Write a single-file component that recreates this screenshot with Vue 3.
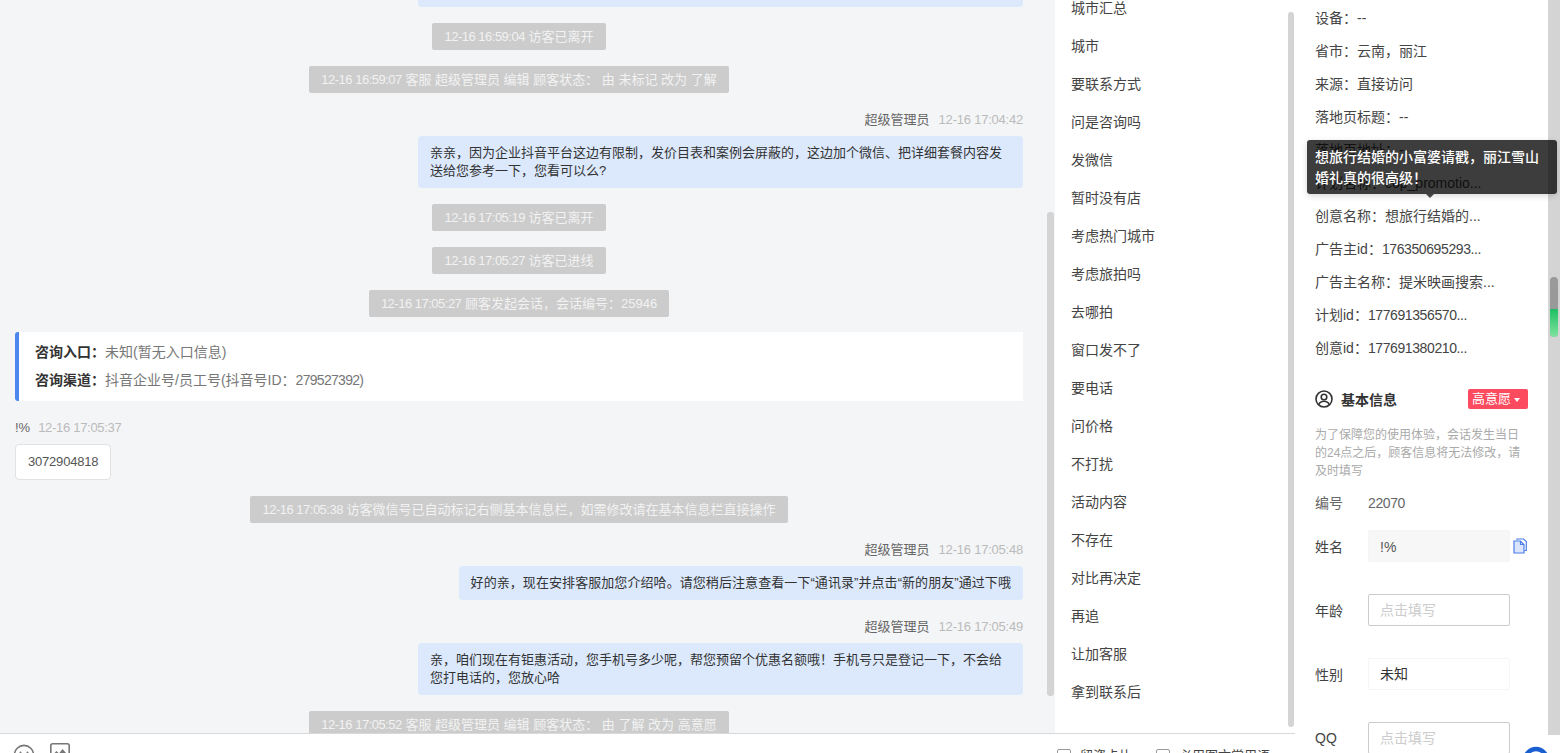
<template>
  <div class="page">
    <div class="main">
      <div class="top">
        <!-- chat -->
        <div class="chat">
          <div class="chat-list">
            <template v-for="(item, i) in messages" :key="i">
              <div v-if="item.type === 'notice'" class="notice">
                <span class="notice-time">{{ item.text.slice(0, 14) }}</span>{{ item.text.slice(14) }}
              </div>
              <div v-else-if="item.type === 'agent'" class="msg msg-right">
                <div class="msg-head">
                  <span class="msg-name">超级管理员</span>
                  <span class="msg-time">{{ item.time }}</span>
                </div>
                <div class="bubble" :class="{ 'bubble-wide': item.wide }">{{ item.text }}</div>
              </div>
              <div v-else-if="item.type === 'visitor'" class="msg msg-left">
                <div class="msg-head">
                  <span class="msg-name">!%</span>
                  <span class="msg-time">{{ item.time }}</span>
                </div>
                <div class="bubble-white">{{ item.text }}</div>
              </div>
              <div v-else class="entry-card">
                <div><b>咨询入口：</b>未知(暂无入口信息)</div>
                <div><b>咨询渠道：</b>抖音企业号/员工号(抖音号ID：<span class="num">279527392</span>)</div>
              </div>
            </template>
          </div>
          <div class="chat-thumb"></div>
        </div>

        <!-- quick tags -->
        <div class="tags">
          <div class="tag-list">
            <div v-for="tag in tags" :key="tag" class="tag">{{ tag }}</div>
          </div>
          <div class="tags-thumb"></div>
        </div>
      </div>

      <div class="toolbar">
        <div class="tools">
          <svg class="tool-smile" width="22" height="22" viewBox="0 0 22 22" fill="none" stroke="#777" stroke-width="1.6">
            <circle cx="11" cy="11" r="9.6" />
            <circle cx="7.5" cy="8.5" r="1" fill="#777" stroke="none" />
            <circle cx="14.5" cy="8.5" r="1" fill="#777" stroke="none" />
            <path d="M6.5 13.5c2.4 2.6 6.6 2.6 9 0" />
          </svg>
          <svg width="20" height="20" viewBox="0 0 20 20" fill="none" stroke="#777" stroke-width="1.6">
            <rect x="0.8" y="0.8" width="18.4" height="18.4" rx="2" />
            <path d="M3.5 11l3-3 2.5 2.5L12.5 6l4 4.5V13h-13z" fill="#777" stroke="none" />
          </svg>
        </div>
        <div class="checks">
          <label class="check"><i></i>留资卡片</label>
          <label class="check"><i></i>必用图文常用语</label>
        </div>
      </div>
    </div>

    <!-- visitor info -->
    <div class="side">
      <div class="side-body">
        <div class="info-rows">
          <div v-for="row in infoRows" :key="row.label" class="info-row">
            {{ row.label }}<span :class="{ num: row.num }">{{ row.value }}</span>
          </div>
        </div>

        <div class="base-head">
          <svg width="18" height="18" viewBox="0 0 18 18" fill="none" stroke="#333" stroke-width="1.6">
            <circle cx="9" cy="9" r="8" />
            <circle cx="9" cy="7" r="2.8" />
            <path d="M3.8 14.6c1-2.3 3-3.3 5.2-3.3s4.2 1 5.2 3.3" />
          </svg>
          <span class="base-title">基本信息</span>
          <span class="level">高意愿<i></i></span>
        </div>
        <p class="base-note">为了保障您的使用体验，会话发生当日的24点之后，顾客信息将无法修改，请及时填写</p>
        <div class="code-row"><span>编号</span><span class="num">22070</span></div>

        <div class="form">
          <div class="form-row">
            <span class="form-label">姓名</span>
            <div class="field field-off">!%</div>
            <svg class="copy" width="14" height="16" viewBox="0 0 14 16" fill="none" stroke="#4d7fe8" stroke-width="1.2">
              <path d="M4 2V1h6.5L13.3 3.5V12.5H11.5" />
              <path d="M1 3h6.5l3.5 3.5V15H1z" fill="#dbe6fb" />
              <path d="M7.5 3v3.5H11" />
            </svg>
          </div>
          <div class="form-row">
            <span class="form-label">年龄</span>
            <div class="field field-empty">点击填写</div>
          </div>
          <div class="form-row">
            <span class="form-label">性别</span>
            <div class="field field-select">未知</div>
          </div>
          <div class="form-row">
            <span class="form-label">QQ</span>
            <div class="field field-empty">点击填写</div>
          </div>
        </div>
      </div>

      <div class="side-thumb"><div class="side-thumb-green"></div></div>

      <div class="tooltip">想旅行结婚的小富婆请戳，丽江雪山婚礼真的很高级！</div>

      <div class="float-btn">
        <svg width="48" height="18" viewBox="0 0 48 18" fill="none">
          <circle cx="24" cy="25" r="11" stroke="#1a5fd0" stroke-width="4.5" />
        </svg>
      </div>
    </div>
  </div>
</template>

<script setup>
const messages = [
  { type: 'notice', text: '12-16 16:59:04 访客已离开' },
  { type: 'notice', text: '12-16 16:59:07 客服 超级管理员 编辑 顾客状态： 由 未标记 改为 了解' },
  {
    type: 'agent',
    time: '12-16 17:04:42',
    text: '亲亲，因为企业抖音平台这边有限制，发价目表和案例会屏蔽的，这边加个微信、把详细套餐内容发送给您参考一下，您看可以么?',
  },
  { type: 'notice', text: '12-16 17:05:19 访客已离开' },
  { type: 'notice', text: '12-16 17:05:27 访客已进线' },
  { type: 'notice', text: '12-16 17:05:27 顾客发起会话，会话编号：25946' },
  { type: 'entry' },
  { type: 'visitor', time: '12-16 17:05:37', text: '3072904818' },
  { type: 'notice', text: '12-16 17:05:38 访客微信号已自动标记右侧基本信息栏，如需修改请在基本信息栏直接操作' },
  {
    type: 'agent',
    time: '12-16 17:05:48',
    wide: true,
    text: '好的亲，现在安排客服加您介绍哈。请您稍后注意查看一下“通讯录”并点击“新的朋友”通过下哦',
  },
  {
    type: 'agent',
    time: '12-16 17:05:49',
    text: '亲，咱们现在有钜惠活动，您手机号多少呢，帮您预留个优惠名额哦！手机号只是登记一下，不会给您打电话的，您放心哈',
  },
  { type: 'notice', text: '12-16 17:05:52 客服 超级管理员 编辑 顾客状态： 由 了解 改为 高意愿' },
]

const tags = [
  '城市汇总', '城市', '要联系方式', '问是咨询吗', '发微信', '暂时没有店', '考虑热门城市', '考虑旅拍吗',
  '去哪拍', '窗口发不了', '要电话', '问价格', '不打扰', '活动内容', '不存在', '对比再决定', '再追', '让加客服', '拿到联系后',
]

const infoRows = [
  { label: '设备：', value: '--' },
  { label: '省市：', value: '云南，丽江' },
  { label: '来源：', value: '直接访问' },
  { label: '落地页标题：', value: '--' },
  { label: '落地页地址：', value: '--' },
  { label: '计划名称：', value: 'cop_promotio...' },
  { label: '创意名称：', value: '想旅行结婚的...' },
  { label: '广告主id：', value: '176350695293...', num: true },
  { label: '广告主名称：', value: '提米映画搜索...' },
  { label: '计划id：', value: '177691356570...', num: true },
  { label: '创意id：', value: '177691380210...', num: true },
]
</script>

<style>
html,
body {
  overflow: hidden;
}
</style>

<style scoped>
.page {
  display: flex;
  width: 1560px;
  height: 753px;
  overflow: hidden;
  background: #fff;
  font-family: "Liberation Sans", "Noto Sans CJK SC", sans-serif;
  font-size: 13px;
  color: #444;
}

.num {
  letter-spacing: -0.4px;
}

.main {
  display: flex;
  flex-direction: column;
  width: 1295px;
  flex-shrink: 0;
}

.top {
  display: flex;
  height: 733px;
  flex-shrink: 0;
  overflow: hidden;
  border-bottom: 1px solid #d9d9d9;
}

/* chat */
.chat {
  position: relative;
  width: 1055px;
  flex-shrink: 0;
  overflow: hidden;
  background: #f4f5f7;
}

.chat-list {
  display: flex;
  flex-direction: column;
  margin-top: -45px;
  padding: 0 32px 0 15px;
}

.chat-list::before {
  content: "";
  align-self: flex-end;
  width: 605px;
  height: 52px;
  background: #dce9fd;
  border-radius: 4px;
}

.notice {
  align-self: center;
  margin-top: 16px;
  padding: 0 12px;
  height: 27px;
  line-height: 27px;
  background: #ccc;
  color: #f2f2f2;
  border-radius: 2px;
  white-space: pre;
}

.notice-time {
  letter-spacing: -0.5px;
}

.msg {
  display: flex;
  flex-direction: column;
  align-items: flex-start;
  margin-top: 16px;
}

.msg-right {
  align-items: flex-end;
}

.msg-head {
  height: 22px;
  line-height: 22px;
  margin-bottom: 5px;
  white-space: nowrap;
}

.msg-name {
  color: #666;
}

.msg-time {
  margin-left: 9px;
  letter-spacing: -0.22px;
  color: #bbb;
}

.msg-left .msg-time {
  margin-left: 8px;
  letter-spacing: -0.3px;
}

.bubble {
  max-width: 581px;
  padding: 8px 12px;
  line-height: 18px;
  background: #dce9fd;
  color: #333;
  border-radius: 4px;
}

.bubble-wide {
  letter-spacing: 0.07px;
}

.bubble-white {
  padding: 8px 12px;
  height: 36px;
  box-sizing: border-box;
  line-height: 18px;
  letter-spacing: -0.2px;
  background: #fff;
  color: #555;
  border: 1px solid #e2e2e2;
  border-radius: 4px;
}

.entry-card {
  margin-top: 15px;
  padding: 6px 16px;
  height: 69px;
  box-sizing: border-box;
  font-size: 14px;
  line-height: 28px;
  background: #fff;
  color: #777;
  border-left: 4px solid #4d86ef;
  border-radius: 3px 0 0 3px;
}

.entry-card b {
  color: #333;
}

.entry-card .num {
  letter-spacing: -0.7px;
}

.chat-thumb {
  position: absolute;
  top: 212px;
  right: 1px;
  width: 7px;
  height: 484px;
  background: #d4d4d4;
  border-radius: 3px;
}

/* quick tags */
.tags {
  position: relative;
  flex: 1;
  overflow: hidden;
  font-size: 14px;
  background: #fff;
}

.tag-list {
  margin-top: -11px;
  padding-left: 16px;
}

.tag {
  height: 38px;
  line-height: 38px;
}

.tags-thumb {
  position: absolute;
  top: 12px;
  right: 1px;
  width: 6px;
  height: 715px;
  background: #d4d4d4;
  border-radius: 3px;
}

/* bottom toolbar */
.toolbar {
  display: flex;
  justify-content: space-between;
  flex: 1;
  overflow: hidden;
  background: #fff;
}

.tools {
  display: flex;
  align-items: flex-start;
  gap: 15px;
  padding: 9px 0 0 13px;
}

.tool-smile {
  margin-top: 1px;
}

.checks {
  display: flex;
  gap: 24px;
  width: 238px;
  padding-top: 15px;
}

.check {
  display: flex;
  line-height: 14px;
  white-space: nowrap;
}

.check i {
  width: 14px;
  height: 14px;
  box-sizing: border-box;
  margin-right: 9px;
  border: 1px solid #999;
  border-radius: 2px;
}

/* visitor info */
.side {
  position: relative;
  flex: 1;
  font-size: 14px;
  background: #d4d4d4;
}

.side-body {
  width: 253px;
  height: 753px;
  overflow: hidden;
  background: #fff;
}

.info-rows {
  padding: 2px 0 0 20px;
}

.info-row {
  height: 33px;
  line-height: 33px;
  white-space: nowrap;
}

.base-head {
  display: flex;
  align-items: center;
  height: 20px;
  margin-top: 24px;
  padding: 0 20px;
}

.base-title {
  margin-left: 8px;
  font-weight: 700;
  color: #333;
}

.level {
  display: flex;
  align-items: center;
  margin-left: auto;
  padding: 0 4px;
  height: 20px;
  width: 60px;
  box-sizing: border-box;
  font-size: 13px;
  line-height: 20px;
  background: #fc4a5e;
  color: #fff;
  border-radius: 2px;
}

.level i {
  margin: 1px 0 0 3px;
  border-style: solid;
  border-width: 4px 3.5px 0;
  border-color: #fff transparent transparent;
}

.base-note {
  margin: 17px 0 0;
  padding: 0 20px;
  font-size: 12px;
  line-height: 18px;
  color: #aaa;
}

.code-row {
  display: flex;
  height: 22px;
  line-height: 22px;
  margin-top: 12px;
  padding-left: 20px;
  color: #666;
}

.code-row span:first-child {
  width: 53px;
}

.form {
  position: relative;
  width: 259px;
  margin-top: 13px;
  padding: 3px 0 0 20px;
  box-sizing: border-box;
  background: #fff;
}

.form-row {
  display: flex;
  align-items: center;
  height: 32px;
  margin-bottom: 32px;
}

.form-label {
  width: 53px;
  flex-shrink: 0;
}

.field {
  width: 142px;
  height: 32px;
  box-sizing: border-box;
  padding: 0 11px;
  line-height: 30px;
  border: 1px solid #f5f5f5;
  border-radius: 2px;
  color: #333;
}

.field-off {
  background: #f7f7f7;
  color: #555;
  line-height: 32px;
}

.field-empty {
  border-color: #ccc;
  color: #ccc;
}

.copy {
  margin-left: 3px;
}

.side-thumb {
  position: absolute;
  top: 277px;
  left: 255px;
  width: 8px;
  height: 60px;
  overflow: hidden;
  background: #999;
  border-radius: 4px;
}

.side-thumb-green {
  margin-top: 32px;
  height: 28px;
  background: linear-gradient(#1fbf63, #7fe39f);
}

.tooltip {
  position: absolute;
  top: 140px;
  left: 12px;
  width: 250px;
  height: 54px;
  box-sizing: border-box;
  padding: 7px 8px;
  font-size: 14px;
  font-weight: 500;
  line-height: 21px;
  background: rgba(0, 0, 0, 0.76);
  color: #fff;
  border-radius: 3px;
  box-shadow: 0 2px 6px rgba(0, 0, 0, 0.15);
}

.tooltip::after {
  content: "";
  position: absolute;
  top: 54px;
  left: 119px;
  border-style: solid;
  border-width: 4px 4px 0;
  border-color: #444 transparent transparent;
}

.float-btn {
  position: absolute;
  left: 217px;
  top: 735px;
  width: 48px;
  height: 18px;
  background: #fff;
  border-radius: 6px 0 0 0;
}

.float-btn svg {
  display: block;
}
</style>
